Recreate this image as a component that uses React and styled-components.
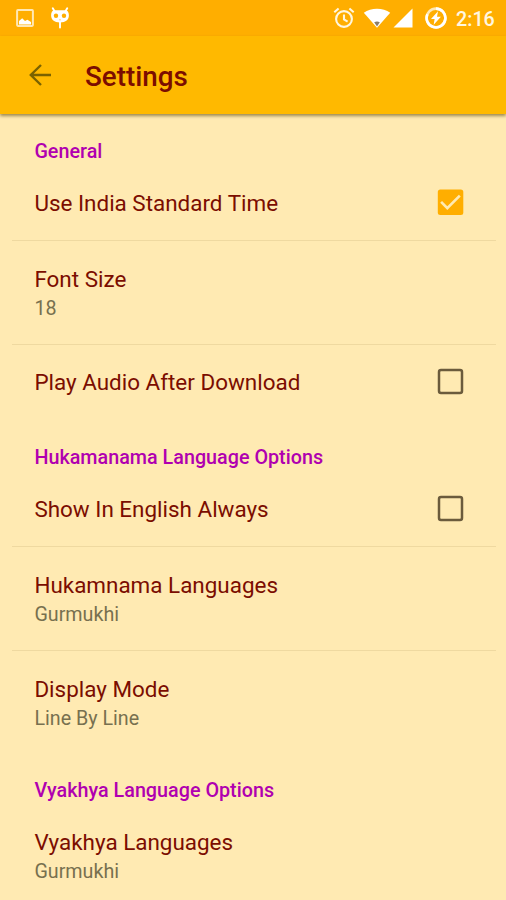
import React from "react";
import styled, { createGlobalStyle } from "styled-components";

const SECTIONS = [
  {
    title: "General",
    height: 51,
    items: [
      { title: "Use India Standard Time", checked: true },
      { title: "Font Size", summary: "18" },
      { title: "Play Audio After Download", checked: false },
    ],
  },
  {
    title: "Hukamanama Language Options",
    height: 52,
    items: [
      { title: "Show In English Always", checked: false },
      { title: "Hukamnama Languages", summary: "Gurmukhi" },
      { title: "Display Mode", summary: "Line By Line" },
    ],
  },
  {
    title: "Vyakhya Language Options",
    height: 49.4,
    items: [{ title: "Vyakhya Languages", summary: "Gurmukhi" }],
  },
];

const App = () => {
  return (
    <>
      <GlobalStyle />
      <Screen>
        <StatusBar>
          <PictureIcon />
          <CyanogenIcon />
          <Spacer />
          <AlarmIcon />
          <WifiIcon />
          <SignalIcon />
          <BatteryIcon />
          <Clock>2:16</Clock>
        </StatusBar>
        <Toolbar>
          <BackButton aria-label="Back">
            <svg width="24" height="24" viewBox="0 0 24 24" fill="none" stroke="#7a6200" strokeWidth="2.4">
              <path d="M23 12H3M13 2 2.800 12 13 22" />
            </svg>
          </BackButton>
          <Heading>Settings</Heading>
        </Toolbar>
        <List>
          {SECTIONS.map(({ title, height, items }) => (
            <section key={title}>
              <Category $height={height}>{title}</Category>
              {items.map((item) => (
                <Preference key={item.title} {...item} />
              ))}
            </section>
          ))}
        </List>
      </Screen>
    </>
  );
};

const Preference = ({ title, summary, checked }) => (
  <Row $tall={summary !== undefined}>
    <Texts>
      <Title>{title}</Title>
      {summary && <Summary>{summary}</Summary>}
    </Texts>
    {checked !== undefined && (
      <Checkbox role="checkbox" aria-checked={checked} aria-label={title}>
        <svg width="28" height="28" viewBox="0 0 28 28" fill="none">
          {checked ? (
            <>
              <rect x="1.800" y="0.600" width="25.500" height="25.500" rx="2.500" fill="#ffae00" />
              <path d="m5.100 12.900 6.200 6.200L23.800 6.600" stroke="#ffeab2" strokeWidth="2.700" />
            </>
          ) : (
            <rect x="3" y="1.900" width="23" height="23" rx="2" stroke="#6b5b3c" strokeWidth="2.500" />
          )}
        </svg>
      </Checkbox>
    )}
  </Row>
);

const PictureIcon = () => (
  <Icon width="18" height="18" viewBox="0 0 18 18" $left={16}>
    <rect x="1.100" y="1.100" width="15.800" height="15.800" rx="0.800" fill="none" stroke="#ffe8b5" strokeWidth="2" />
    <path d="M3 15.500V12l3.200-2.700 2.800 2.700 2.400-1.300 3.600 2.300v2.500z" fill="#fff" />
  </Icon>
);

const CyanogenIcon = () => (
  <Icon width="20" height="22" viewBox="0 0 20 22" $left={16}>
    <path d="m2.800 1.200 2 3.500M17.200 1.200l-2 3.500" stroke="#fff" strokeWidth="1.900" strokeLinecap="round" />
    <path d="M5 3.300h10c2.600 0 3.900 1.900 3.900 5 0 4.500-3 7.200-8.900 7.200S1.100 12.800 1.100 8.300c0-3.100 1.300-5 3.900-5z" fill="#fff" />
    <circle cx="6" cy="8.700" r="2.200" fill="#ffae00" />
    <circle cx="14" cy="8.700" r="2.200" fill="#ffae00" />
    <path d="M9 12.800h2" stroke="#ffd27a" strokeWidth="0.900" />
    <path d="M10 15v5.500" stroke="#fff" strokeWidth="1.900" strokeLinecap="round" />
  </Icon>
);

const AlarmIcon = () => (
  <Icon width="22" height="22" viewBox="0 0 22 22" fill="none" stroke="#fff7e0" strokeWidth="2.100">
    <circle cx="11" cy="12" r="7.900" />
    <path d="M11 7.500v5l3.600 2.100M1.300 5.200l4.300-3.700M20.700 5.200l-4.300-3.700" />
  </Icon>
);

const WifiIcon = () => (
  <Icon width="28" height="20" viewBox="0 0 28 20" $left={8}>
    <path d="M.8 4.800C8-.5 20-.5 27.200 4.800L14 19.800z" fill="#fff" />
    <path d="M11.200 14.200q2.800-1.400 5.600 0L14 18.500z" fill="#8a7d68" />
  </Icon>
);

const SignalIcon = () => (
  <Icon width="20" height="20" viewBox="0 0 20 20" $left={2}>
    <path d="M19.500.5v19H.5z" fill="#fff" />
  </Icon>
);

const BatteryIcon = () => (
  <Icon width="22" height="22" viewBox="0 0 22 22" $left={12}>
    <circle cx="11" cy="11" r="9.400" fill="none" stroke="#ffe8b5" strokeWidth="2.600" />
    <path d="M11 1.600a9.400 9.400 0 1 1-8.600 5.600" fill="none" stroke="#fff" strokeWidth="2.600" />
    <path d="M13 4.200 6 12h3.600l-.9 5.800 7.200-8h-3.900z" fill="#fff" />
  </Icon>
);

const GlobalStyle = createGlobalStyle`
  body {
    margin: 0;
    background: #ffeab2;
    font-family: Roboto, sans-serif;
  }
`;

const Screen = styled.div`
  display: flex;
  flex-direction: column;
  height: 900px;
  overflow: hidden;
  background: #ffeab2;
`;

const StatusBar = styled.div`
  display: flex;
  align-items: center;
  flex: none;
  box-sizing: border-box;
  height: 36px;
  padding: 0 11px 0 0;
  background: #ffae00;
`;

const Icon = styled.svg`
  flex: none;
  margin-left: ${({ $left }) => $left || 0}px;
`;

const Spacer = styled.div`
  flex: 1;
`;

const Clock = styled.span`
  width: 39px;
  margin: 3px 0 0 9px;
  color: #fff7e0;
  font-size: 19.7px;
  font-weight: 500;
  line-height: 35px;
  white-space: nowrap;
`;

const Toolbar = styled.header`
  position: relative;
  display: flex;
  align-items: center;
  flex: none;
  height: 78px;
  background: #ffb900;
  box-shadow: 0 2px 3px rgba(80, 60, 0, 0.55);
`;

const BackButton = styled.button`
  display: flex;
  margin: 0 0 0 28px;
  padding: 0;
  border: 0;
  background: none;
`;

const Heading = styled.h1`
  margin: 4px 0 0 33px;
  color: #7b0d00;
  font-size: 27.8px;
  font-weight: 500;
  line-height: 34px;
`;

const List = styled.main`
  flex: 1;
  min-height: 0;
  padding: 1px 10px 0 12px;
  overflow: hidden;
`;

const Category = styled.h2`
  display: flex;
  align-items: flex-end;
  box-sizing: border-box;
  height: ${({ $height }) => $height}px;
  margin: 0;
  padding: 0 22.4px 1.7px;
  color: #b000b0;
  font-size: 19.75px;
  font-weight: 500;
  line-height: 24px;
`;

const Row = styled.div`
  display: flex;
  align-items: center;
  justify-content: space-between;
  box-sizing: border-box;
  height: ${({ $tall }) => ($tall ? 104 : 75)}px;
  padding: 0 32px 0 22.4px;
  border-bottom: 1px solid #efd9a0;

  &:last-child {
    border-bottom-color: transparent;
  }
`;

const Texts = styled.div`
  display: flex;
  flex-direction: column;
`;

const Title = styled.span`
  color: #7b0d00;
  font-size: 22.45px;
  line-height: 30px;
`;

const Summary = styled.span`
  margin: 1px 0 -1px;
  color: #77704f;
  font-size: 19.7px;
  line-height: 28px;
`;

const Checkbox = styled.span`
  display: flex;
  flex: none;
  height: 28px;
`;

export default App;
